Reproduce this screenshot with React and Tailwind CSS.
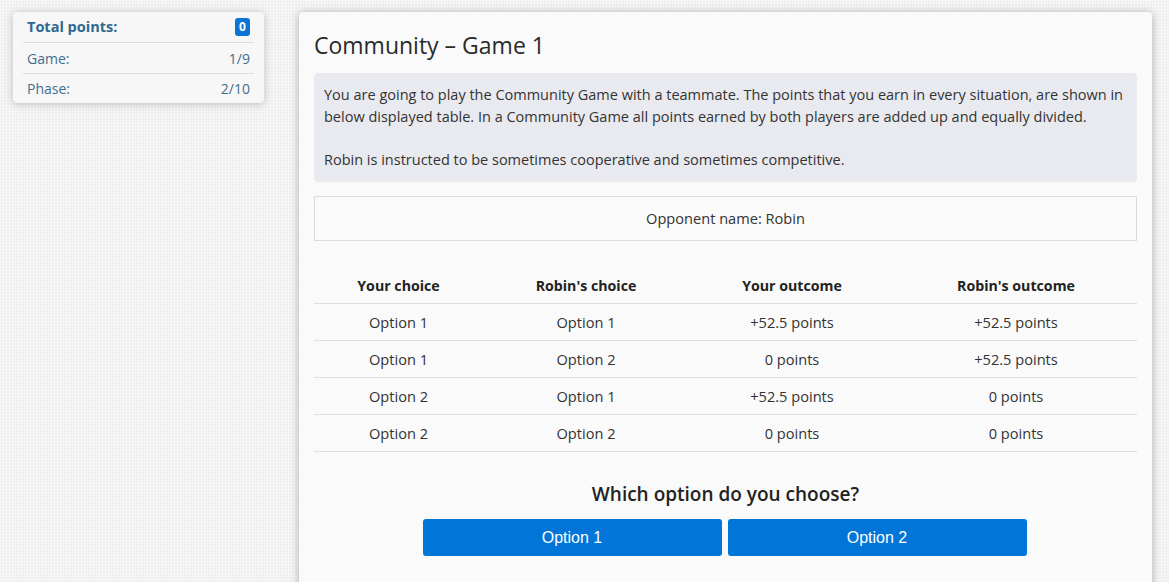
import React from "react";

const rows = [
  ["Option 1", "Option 1", "+52.5 points", "+52.5 points"],
  ["Option 1", "Option 2", "0 points", "+52.5 points"],
  ["Option 2", "Option 1", "+52.5 points", "0 points"],
  ["Option 2", "Option 2", "0 points", "0 points"],
];

const heads = ["Your choice", "Robin's choice", "Your outcome", "Robin's outcome"];

const StatusCard = () => (
  <div className="w-[251px] shrink-0 self-start rounded bg-[#f7f7f7] px-[10px] text-[14px] text-[#3f6e8f] shadow-[0_1px_8px_rgba(0,0,0,0.22)]">
    <div className="flex h-[31px] items-center justify-between border-b border-[#dcdcdc] px-[4px]">
      <span className="text-[14.5px] font-bold text-[#2d6990]">Total points:</span>
      <span className="flex h-[18px] min-w-[15px] items-center justify-center rounded-[3px] bg-[#0a74d6] px-[4px] text-[12px] font-bold text-white">
        0
      </span>
    </div>
    <div className="flex h-[31px] items-center justify-between border-b border-[#dcdcdc] px-[4px]">
      <span>Game:</span>
      <span>1/9</span>
    </div>
    <div className="flex h-[29px] items-center justify-between px-[4px]">
      <span>Phase:</span>
      <span>2/10</span>
    </div>
  </div>
);

const App = () => {
  return (
    <div
      className="flex h-[582px] w-full items-start gap-[35px] overflow-hidden bg-[#efefef] bg-[linear-gradient(90deg,rgba(255,255,255,0.4)_1px,transparent_1px),linear-gradient(rgba(255,255,255,0.4)_1px,transparent_1px)] bg-[size:3px_3px] pl-[13px] pt-[12px] text-[#333]"
      style={{ fontFamily: '"Open Sans", "Noto Sans", sans-serif' }}
    >
      <StatusCard />

      <div className="h-[600px] w-[853px] shrink-0 rounded bg-[#fafafa] px-[15px] pt-[17px] shadow-[0_1px_9px_rgba(0,0,0,0.3)]">
        <h1 className="text-[23px] leading-[32px] text-[#2a2a2a]">Community – Game 1</h1>

        <div className="mt-[12px] rounded-[4px] bg-[#e9eaef] px-[10px] py-[11px] text-[14.5px] leading-[22px] text-[#333]">
          <p>
            You are going to play the Community Game with a teammate. The points that you earn in every situation, are shown in
            below displayed table. In a Community Game all points earned by both players are added up and equally divided.
          </p>
          <p className="mt-[21px]">Robin is instructed to be sometimes cooperative and sometimes competitive.</p>
        </div>

        <div className="mt-[14px] flex h-[45px] items-center justify-center border border-[#dadada] text-[14.6px]">
          Opponent name: Robin
        </div>

        <div className="mt-[26px] text-[14.6px]">
          <div className="grid h-[37px] grid-cols-[169px_206px_206px_242px] items-center border-b border-[#dedede] pt-[2px] text-[14.2px] font-bold text-[#222]">
            {heads.map((h) => (
              <div key={h} className="text-center">
                {h}
              </div>
            ))}
          </div>
          {rows.map((r, i) => (
            <div
              key={i}
              className="grid h-[37px] grid-cols-[169px_206px_206px_242px] items-center border-b border-[#dedede] pt-[2px]"
            >
              {r.map((c, j) => (
                <div key={j} className="text-center">
                  {c}
                </div>
              ))}
            </div>
          ))}
        </div>

        <h2 className="mt-[28px] text-center text-[19px] font-semibold leading-[28px] text-[#222]">
          Which option do you choose?
        </h2>
        <div className="mt-[11px] flex justify-center gap-[6px] pr-[2px]" style={{ fontFamily: '"Liberation Sans", Arial, sans-serif' }}>
          <button className="h-[37px] w-[299px] rounded-[3px] bg-[#0275d8] text-[16px] text-white">Option 1</button>
          <button className="h-[37px] w-[299px] rounded-[3px] bg-[#0275d8] text-[16px] text-white">Option 2</button>
        </div>
      </div>
    </div>
  );
};

export default App;
